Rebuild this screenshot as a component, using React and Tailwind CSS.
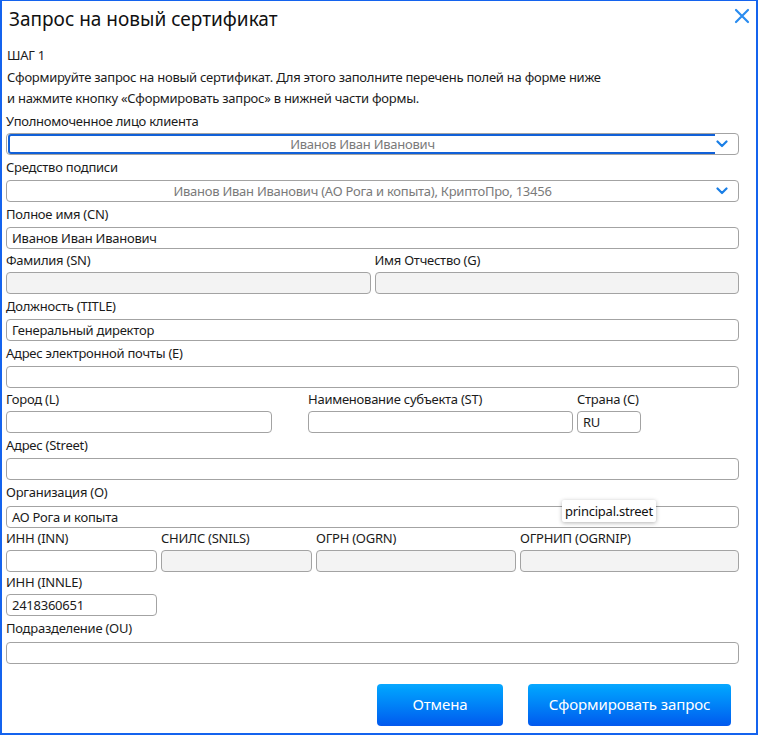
import React from 'react';

const font = { fontFamily: '"Noto Sans", "Open Sans", sans-serif' };

const Label = ({ children, h = 'h-[24px]' }) => (
  <div className={`${h} flex items-center pt-[1px] text-[13px] tracking-[-0.25px] text-[#1b1b1b] whitespace-nowrap`}>
    {children}
  </div>
);

const Input = ({ value = '', disabled = false }) => (
  <div
    className={`h-[22px] rounded-[4px] border border-[#a3a3a3] px-[5px] leading-[20px] text-[13px] tracking-[-0.25px] text-[#1b1b1b] ${
      disabled ? 'bg-[#f3f3f3]' : 'bg-white'
    }`}
  >
    {value}
  </div>
);

const Chevron = () => (
  <svg width="12" height="8" viewBox="0 0 12 8" className="shrink-0">
    <path d="M1.5 1.5 L6 6 L10.5 1.5" fill="none" stroke="#1a7fe6" strokeWidth="2.2" strokeLinecap="round" strokeLinejoin="round" />
  </svg>
);

const Select = ({ value, focused }) => (
  <div className="relative h-[22px] rounded-[4px] border border-[#a3a3a3] bg-white flex items-center">
    {focused && (
      <div className="absolute left-[1px] top-[0px] w-[707px] h-[20px] rounded-l-[3px] border-2 border-r-0 border-[#1060d8]" />
    )}
    <div className="flex-1 text-center text-[13px] tracking-[-0.25px] text-[#7a7a7a] leading-[20px] pl-[8px]">{value}</div>
    <div className="w-[28px] flex justify-center pr-[4px]">
      <Chevron />
    </div>
  </div>
);

const Field = ({ label, h, className = '', ...rest }) => (
  <div className={className}>
    <Label h={h}>{label}</Label>
    <Input {...rest} />
  </div>
);

const btn =
  'h-[42px] rounded-[4px] bg-gradient-to-b from-[#0aa8ff] to-[#0558ee] text-white text-[15px] tracking-[-0.1px]';

export default function App() {
  return (
    <div style={font} className="w-[758px] h-[735px] bg-white border-2 border-t border-[#1463ee] overflow-hidden">
      <div className="flex items-start justify-between h-[44px] pl-[7px] pr-[6px]">
        <h1 className="text-[19px] leading-[36px] text-[#111]">Запрос на новый сертификат</h1>
        <svg width="16" height="16" viewBox="0 0 16 16" className="mt-[7px]">
          <path d="M2 2 L14 14 M14 2 L2 14" stroke="#2a8cf0" strokeWidth="2.2" strokeLinecap="round" />
        </svg>
      </div>

      <div className="pl-[4px] pr-[17px]">
        <div className="text-[13px] leading-[21.5px] tracking-[-0.25px] text-[#1b1b1b] pl-[1px]">
          <div>ШАГ 1</div>
          <div>Сформируйте запрос на новый сертификат. Для этого заполните перечень полей на форме ниже</div>
          <div>и нажмите кнопку «Сформировать запрос» в нижней части формы.</div>
        </div>

        <Label h="h-[23px]">Уполномоченное лицо клиента</Label>
        <Select value="Иванов Иван Иванович" focused />

        <Label h="h-[25px]">Средство подписи</Label>
        <Select value="Иванов Иван Иванович (АО Рога и копыта), КриптоПро, 13456" />

        <Field label="Полное имя (CN)" h="h-[25px]" value="Иванов Иван Иванович" />

        <div className="flex gap-[4px]">
          <Field label="Фамилия (SN)" h="h-[23px]" disabled className="flex-1" />
          <Field label="Имя Отчество (G)" h="h-[23px]" disabled className="flex-1" />
        </div>

        <Field label="Должность (TITLE)" h="h-[25px]" value="Генеральный директор" />
        <Field label="Адрес электронной почты (E)" h="h-[25px]" />

        <div className="flex">
          <Field label="Город (L)" h="h-[23px]" className="w-[266px]" />
          <Field label="Наименование субъекта (ST)" h="h-[23px]" className="w-[265px] ml-[36px]" />
          <Field label="Страна (C)" h="h-[23px]" value="RU" className="w-[64px] ml-[4px]" />
        </div>

        <Field label="Адрес (Street)" h="h-[25px]" />

        <div className="relative">
          <Field label="Организация (O)" h="h-[26px]" value="АО Рога и копыта" />
          <div className="absolute left-[556px] top-[20px] h-[22px] px-[3px] leading-[22px] text-[13px] tracking-[-0.25px] text-[#111] bg-white rounded-[2px] shadow-[0_1px_4px_rgba(0,0,0,0.3)]">
            principal.street
          </div>
        </div>

        <div className="flex gap-[4px]">
          <Field label="ИНН (INN)" h="h-[22px]" className="w-[151px]" />
          <Field label="СНИЛС (SNILS)" h="h-[22px]" disabled className="w-[151px]" />
          <Field label="ОГРН (OGRN)" h="h-[22px]" disabled className="w-[200px]" />
          <Field label="ОГРНИП (OGRNIP)" h="h-[22px]" disabled className="flex-1" />
        </div>

        <Field label="ИНН (INNLE)" h="h-[22px]" value="2418360651" className="w-[151px]" />
        <Field label="Подразделение (OU)" h="h-[26px]" />

        <div className="flex justify-end gap-[25px] pt-[20px] pr-[8px]">
          <button className={`w-[126px] ${btn}`}>Отмена</button>
          <button className={`w-[203px] ${btn}`}>Сформировать запрос</button>
        </div>
      </div>
    </div>
  );
}
